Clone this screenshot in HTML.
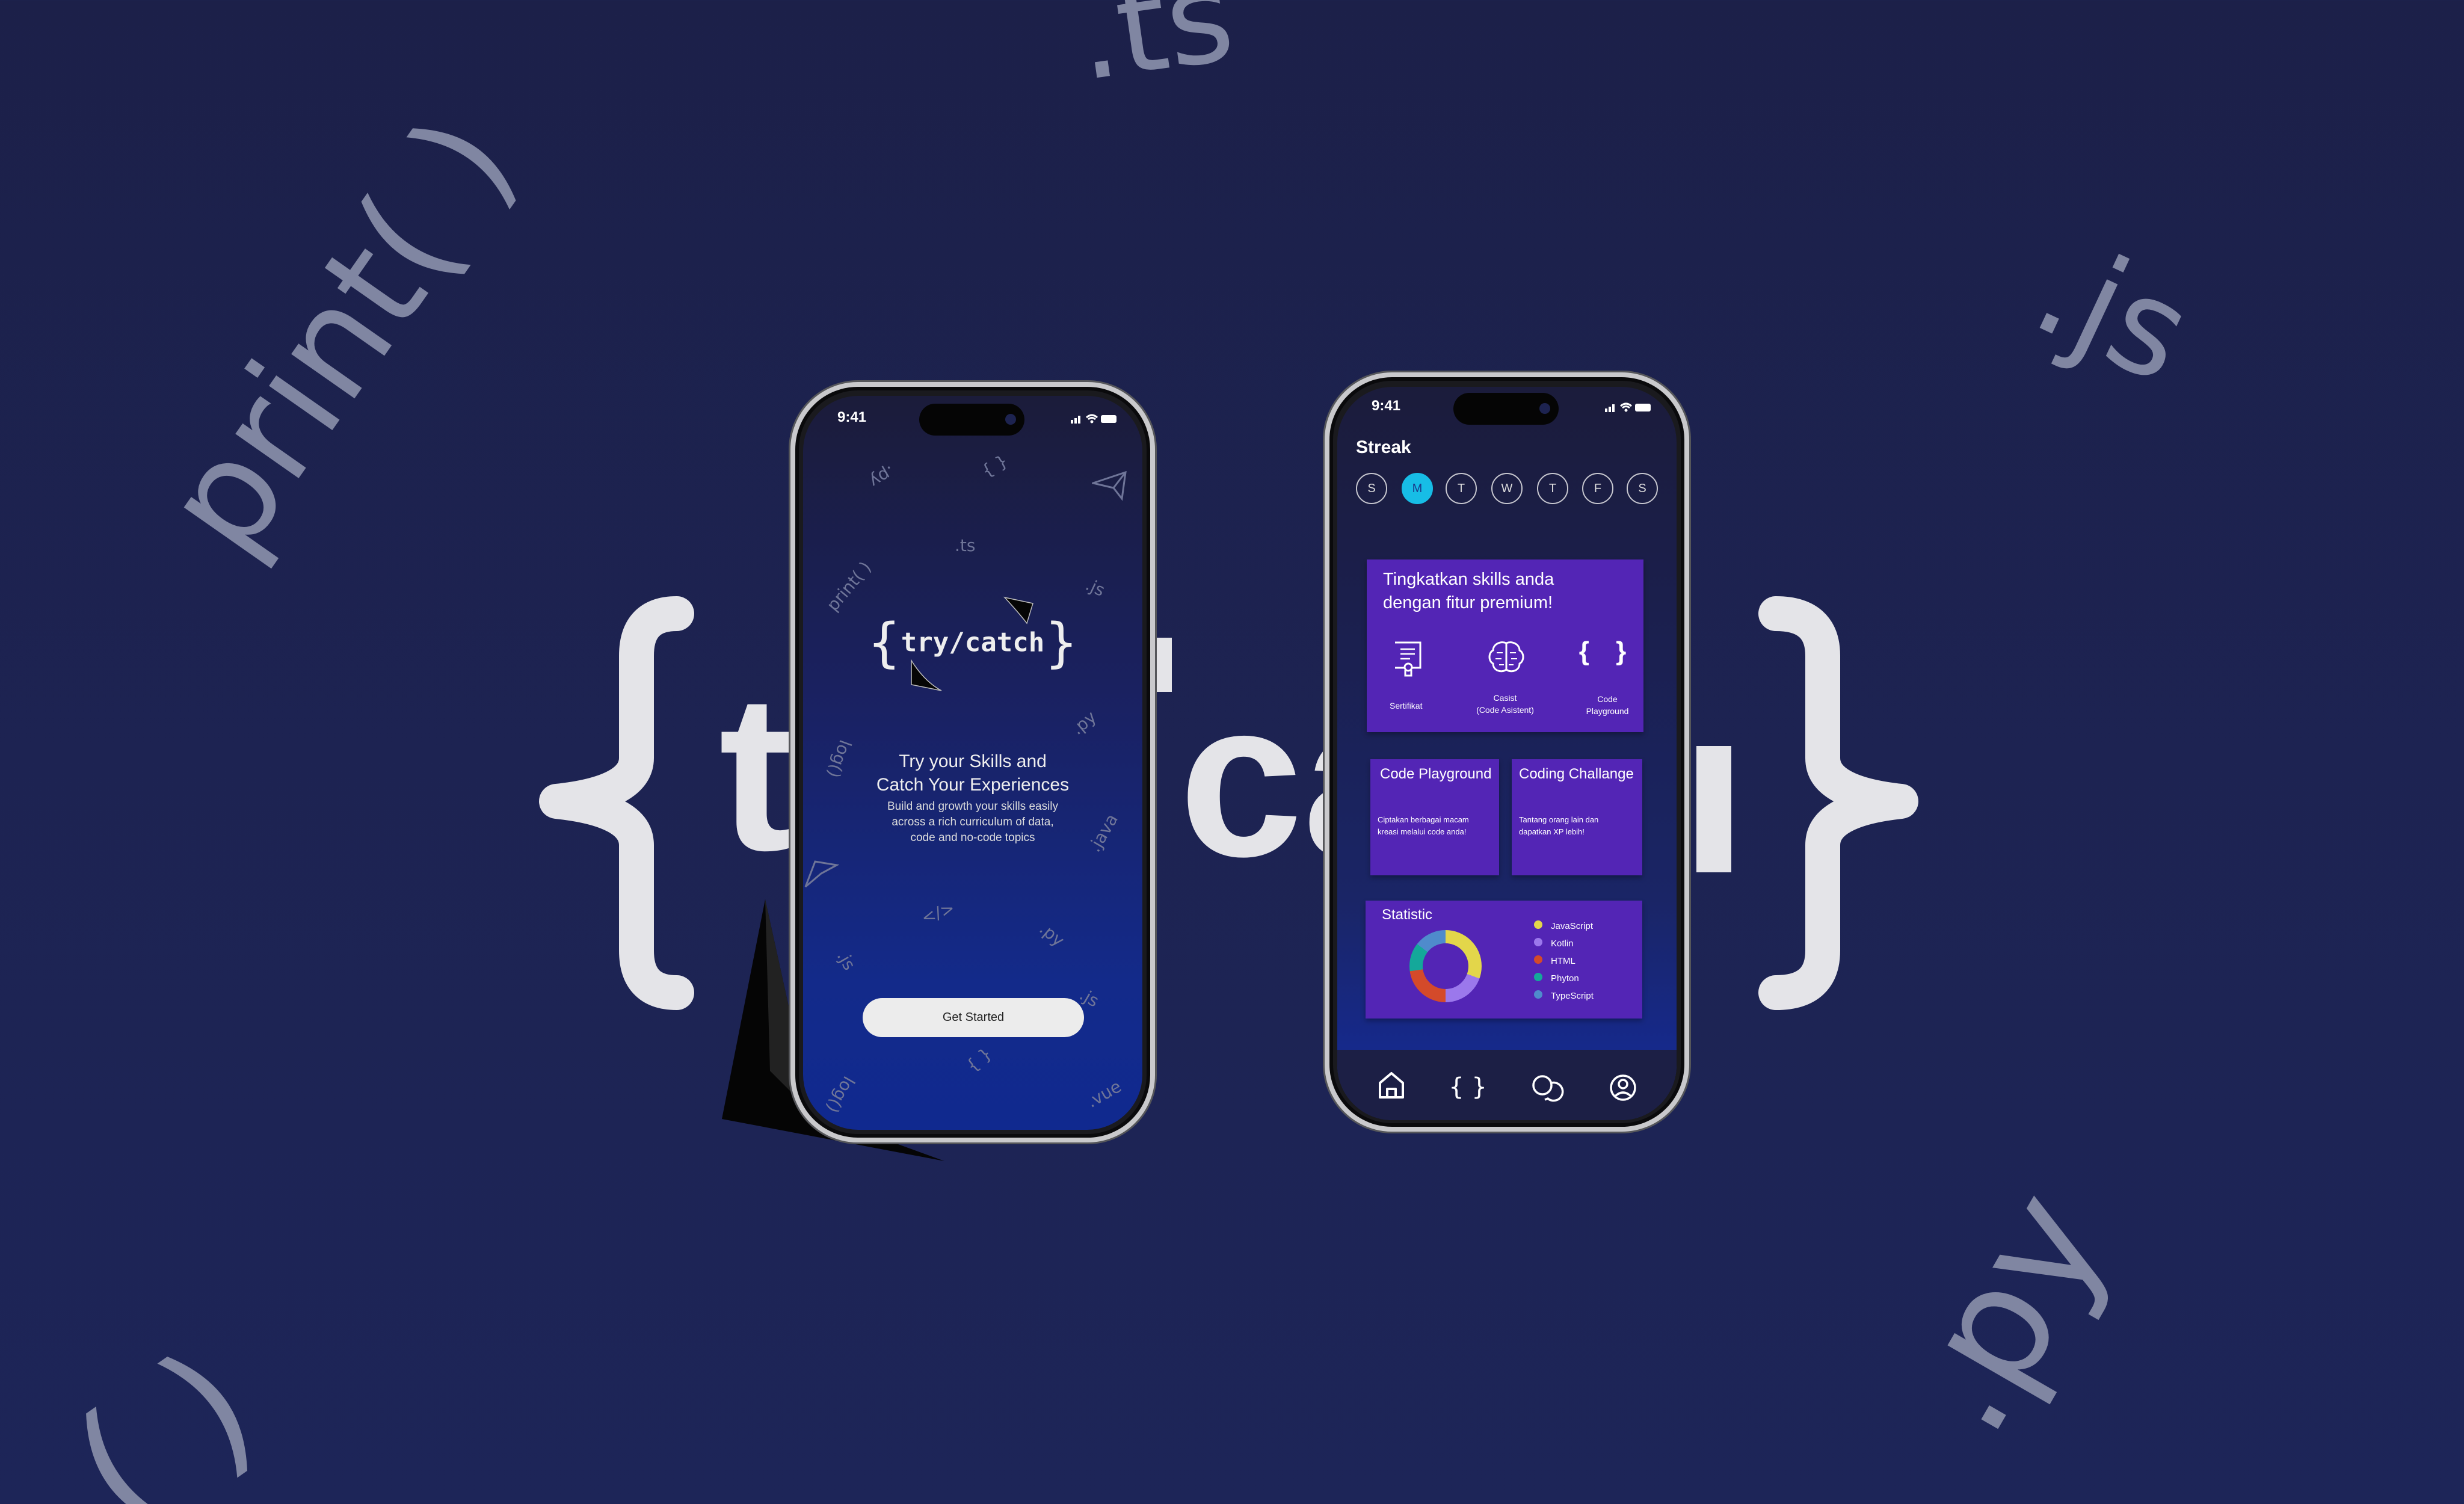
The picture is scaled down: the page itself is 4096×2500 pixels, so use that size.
<!DOCTYPE html>
<html style="width:4096px;height:2500px;overflow:hidden"><head><meta charset="utf-8"><style>
*{margin:0;padding:0;box-sizing:border-box}
body{width:4096px;height:2500px;overflow:hidden;position:relative;background:linear-gradient(180deg,#1c2049 0%,#1d2352 50%,#1d2558 100%);font-family:"Liberation Sans",sans-serif}
.a{position:absolute;white-space:nowrap}
.bg{color:#8086a2;font-family:"DejaVu Sans","Liberation Sans",sans-serif}
.big{color:#e4e4e8;font-weight:bold;font-family:"Liberation Sans",sans-serif}
.phone{position:absolute;border-radius:112px;background:#1a1a1e;border:8px solid #c9c9cc;box-shadow:0 0 0 3px #55565a,inset 0 0 0 6px #0a0a0c}
.screen{position:absolute;overflow:hidden;border-radius:92px}
.st{color:#fff;font-size:24px;font-weight:bold}
.island{position:absolute;background:#050505;border-radius:30px}
.sc{color:#6f7598;font-size:28px;font-family:"DejaVu Sans",sans-serif}
.card{position:absolute;background:#5325b5;box-shadow:0 4px 8px rgba(0,0,0,.3);color:#fff}
.day{position:absolute;width:52px;height:52px;border:2px solid #c8c8d0;border-radius:50%;color:#ddd;font-size:20px;text-align:center;line-height:48px;top:786px}
</style></head><body>

<!-- background scattered texts -->
<div class="a bg" style="left:160px;top:420px;font-size:235px;transform:rotate(-55deg);transform-origin:center">print( )</div>
<div class="a bg" style="left:1790px;top:-80px;font-size:210px;transform:rotate(-8deg)">.ts</div>
<div class="a bg" style="left:3390px;top:390px;font-size:220px;transform:rotate(25deg)">.js</div>
<div class="a bg" style="left:3130px;top:2030px;font-size:260px;transform:rotate(-60deg)">.py</div>
<div class="a bg" style="left:130px;top:2240px;font-size:260px;transform:rotate(-35deg)">( )</div>

<!-- big background logo -->
<svg class="a" style="left:0;top:0" width="4096" height="2500">
 <path d="M1125 1020 Q1058 1020 1058 1090 L1058 1260 Q1058 1318 925 1332 Q1058 1346 1058 1405 L1058 1580 Q1058 1650 1125 1650" stroke="#e4e4e8" stroke-width="58" fill="none" stroke-linecap="round" stroke-linejoin="round"/>
 <path d="M2952 1020 Q3030 1020 3030 1090 L3030 1260 Q3030 1318 3160 1332 Q3030 1346 3030 1405 L3030 1580 Q3030 1650 2952 1650" stroke="#e4e4e8" stroke-width="58" fill="none" stroke-linecap="round" stroke-linejoin="round"/>
</svg>
<div class="a big" style="left:1195px;top:1100px;font-size:370px;line-height:1">t</div>
<div class="a big" style="left:1960px;top:1110px;font-size:370px;line-height:1">ca</div>
<div class="a" style="left:1920px;top:1060px;width:28px;height:90px;background:#e4e4e8"></div>
<div class="a" style="left:2820px;top:1240px;width:58px;height:210px;background:#e4e4e8"></div>

<!-- black kite -->
<svg class="a" style="left:1150px;top:1480px" width="450" height="470"><polygon points="122,15 50,380 420,450 200,370" fill="#050505"/><polygon points="122,15 200,370 130,300" fill="#222"/></svg>

<!-- LEFT PHONE -->
<div class="phone" style="left:1314px;top:635px;width:606px;height:1264px"></div>
<div class="screen" style="left:1335px;top:658px;width:564px;height:1220px;background:linear-gradient(180deg,#1b1c3a 0%,#1a2160 40%,#132a8a 80%,#10298f 100%)">
 <div class="a st" style="left:57px;top:22px">9:41</div>
 <div class="island" style="left:193px;top:13px;width:175px;height:53px"><div style="position:absolute;right:14px;top:17px;width:18px;height:18px;border-radius:50%;background:#1d2350"></div></div>
 <svg class="a" style="left:445px;top:28px" width="80" height="20"><rect x="0" y="12" width="4" height="6" fill="#fff"/><rect x="6" y="9" width="4" height="9" fill="#fff"/><rect x="12" y="5" width="4" height="13" fill="#fff"/><path d="M26 8 Q35 0 44 8 M29 11 Q35 6 41 11" stroke="#fff" stroke-width="3" fill="none"/><circle cx="35" cy="15" r="2.5" fill="#fff"/><rect x="50" y="4" width="26" height="13" rx="3" fill="#fff"/></svg>
 <div class="a sc" style="left:110px;top:118px;transform:rotate(150deg)">.py</div>
 <div class="a sc" style="left:296px;top:100px;transform:rotate(-30deg)">{ }</div>
 <svg class="a" style="left:480px;top:125px" width="60" height="50"><path d="M2 20 L56 2 L50 46 L36 28 Z M36 28 L56 2" stroke="#6f7598" stroke-width="3" fill="none"/></svg>
 <div class="a sc" style="left:252px;top:232px">.ts</div>
 <div class="a sc" style="left:28px;top:300px;transform:rotate(-50deg)">print( )</div>
 <div class="a sc" style="left:470px;top:302px;transform:rotate(25deg)">.js</div>
 <div class="a sc" style="left:28px;top:587px;transform:rotate(110deg)">log()</div>
 <div class="a sc" style="left:445px;top:527px;transform:rotate(-40deg)">.py</div>
 <div class="a sc" style="left:465px;top:710px;transform:rotate(-60deg)">.java</div>
 <svg class="a" style="left:0;top:770px" width="60" height="50"><path d="M4 46 L20 4 L56 10 L30 24 Z" stroke="#6f7598" stroke-width="3" fill="none"/></svg>
 <div class="a sc" style="left:196px;top:843px;transform:rotate(-20deg)">&lt;/&gt;</div>
 <div class="a sc" style="left:392px;top:879px;transform:rotate(40deg)">.py</div>
 <div class="a sc" style="left:56px;top:922px;transform:rotate(60deg)">.js</div>
 <div class="a sc" style="left:460px;top:984px;transform:rotate(30deg)">.js</div>
 <div class="a sc" style="left:270px;top:1087px;transform:rotate(-40deg)">{ }</div>
 <div class="a sc" style="left:30px;top:1145px;transform:rotate(120deg)">log()</div>
 <div class="a sc" style="left:470px;top:1144px;transform:rotate(-30deg)">.vue</div>
 <!-- logo -->
 <div class="a" style="left:0;width:564px;top:360px;text-align:center;color:#eee;font-family:'DejaVu Sans Mono','Liberation Mono',monospace;font-weight:bold;line-height:100px"><span style="font-size:88px;font-weight:normal;vertical-align:middle;font-family:'DejaVu Sans',sans-serif">{</span><span style="font-size:44px;vertical-align:middle">try/catch</span><span style="font-size:88px;font-weight:normal;vertical-align:middle;font-family:'DejaVu Sans',sans-serif">}</span></div>
 <svg class="a" style="left:150px;top:330px" width="260" height="180"><path d="M185 5 L232 15 L222 48 Q208 30 185 5 Z" fill="#050505" stroke="#bbb" stroke-width="1.5"/><path d="M30 110 L30 150 L80 160 Q52 145 30 110 Z" fill="#050505" stroke="#bbb" stroke-width="1.5"/></svg>
 <div class="a" style="left:0;width:564px;top:588px;text-align:center;color:#eee;font-size:30px;line-height:39px">Try your Skills and<br>Catch Your Experiences</div>
 <div class="a" style="left:0;width:564px;top:670px;text-align:center;color:#ddd;font-size:19px;line-height:26px">Build and growth your skills easily<br>across a rich curriculum of data,<br>code and no-code topics</div>
 <div class="a" style="left:99px;top:1001px;width:368px;height:65px;background:#ececec;border-radius:33px;text-align:center;line-height:65px;color:#222;font-size:20px">Get Started</div>
</div>

<!-- RIGHT PHONE -->
<div class="phone" style="left:2202px;top:619px;width:606px;height:1262px"></div>
<div class="screen" style="left:2223px;top:643px;width:564px;height:1219px;background:linear-gradient(180deg,#1b1c3b 0%,#1b1f4d 30%,#1a2566 70%,#16298a 90%)">
 <div class="a st" style="left:57px;top:18px">9:41</div>
 <div class="island" style="left:193px;top:10px;width:175px;height:53px"><div style="position:absolute;right:14px;top:17px;width:18px;height:18px;border-radius:50%;background:#1d2350"></div></div>
 <svg class="a" style="left:445px;top:24px" width="80" height="20"><rect x="0" y="12" width="4" height="6" fill="#fff"/><rect x="6" y="9" width="4" height="9" fill="#fff"/><rect x="12" y="5" width="4" height="13" fill="#fff"/><path d="M26 8 Q35 0 44 8 M29 11 Q35 6 41 11" stroke="#fff" stroke-width="3" fill="none"/><circle cx="35" cy="15" r="2.5" fill="#fff"/><rect x="50" y="4" width="26" height="13" rx="3" fill="#fff"/></svg>
 <div class="a" style="left:31px;top:84px;color:#fff;font-size:30px;font-weight:bold">Streak</div>
</div>
<div class="day" style="left:2254px">S</div>
<div class="day" style="left:2330px;background:#17bde6;border-color:#17bde6;color:#1b3a8a">M</div>
<div class="day" style="left:2403px">T</div>
<div class="day" style="left:2479px">W</div>
<div class="day" style="left:2555px">T</div>
<div class="day" style="left:2630px">F</div>
<div class="day" style="left:2704px">S</div>

<div class="card" style="left:2272px;top:930px;width:460px;height:287px">
 <div class="a" style="left:27px;top:14px;font-size:29px;line-height:39px">Tingkatkan skills anda<br>dengan fitur premium!</div>
 <svg class="a" style="left:44px;top:135px" width="50" height="60"><path d="M3 3 H45 V45 H32 M18 45 H3 Z" stroke="#fff" stroke-width="3" fill="none"/><path d="M12 14 H36 M12 22 H36 M12 30 H28" stroke="#fff" stroke-width="2.5"/><circle cx="25" cy="44" r="6" stroke="#fff" stroke-width="3" fill="none"/><path d="M20 49 V58 H30 V49" stroke="#fff" stroke-width="3" fill="none"/></svg>
 <div class="a" style="left:38px;top:235px;font-size:14px">Sertifikat</div>
 <svg class="a" style="left:202px;top:135px" width="60" height="56"><path d="M30 4 C20 0 8 6 8 16 C0 20 0 34 8 38 C8 50 22 54 30 48 C38 54 52 50 52 38 C60 34 60 20 52 16 C52 6 40 0 30 4 Z M30 4 V48" stroke="#fff" stroke-width="3" fill="none"/><path d="M14 20 H24 M36 20 H46 M12 30 H22 M38 30 H48 M18 40 H26 M34 40 H42" stroke="#fff" stroke-width="2"/></svg>
 <div class="a" style="left:140px;top:220px;width:180px;text-align:center;font-size:14px;line-height:20px">Casist<br>(Code Asistent)</div>
 <div class="a" style="left:350px;top:128px;width:100px;text-align:center;font-size:44px;font-weight:bold;letter-spacing:16px">{ }</div>
 <div class="a" style="left:350px;top:222px;width:100px;text-align:center;font-size:14px;line-height:20px">Code<br>Playground</div>
</div>

<div class="card" style="left:2278px;top:1262px;width:214px;height:193px">
 <div class="a" style="left:16px;top:11px;font-size:24px">Code Playground</div>
 <div class="a" style="left:12px;top:91px;font-size:13px;line-height:20px">Ciptakan berbagai macam<br>kreasi melalui code anda!</div>
</div>
<div class="card" style="left:2513px;top:1262px;width:217px;height:193px">
 <div class="a" style="left:12px;top:11px;font-size:24px">Coding Challange</div>
 <div class="a" style="left:12px;top:91px;font-size:13px;line-height:20px">Tantang orang lain dan<br>dapatkan XP lebih!</div>
</div>

<div class="card" style="left:2270px;top:1497px;width:460px;height:196px">
 <div class="a" style="left:27px;top:10px;font-size:24px">Statistic</div>
 <div class="a" style="left:73px;top:49px;width:120px;height:120px;border-radius:50%;background:conic-gradient(#e3d64a 0 110deg,#9b78ec 110deg 180deg,#d44a2a 180deg 262deg,#14a89a 262deg 308deg,#4f8bcc 308deg 360deg)"></div>
 <div class="a" style="left:95px;top:71px;width:76px;height:76px;border-radius:50%;background:#5325b5"></div>
 <div class="a" style="left:280px;top:28px;font-size:15px;line-height:29px">
  <div><span style="display:inline-block;width:14px;height:14px;border-radius:50%;background:#e3d64a;margin-right:14px"></span>JavaScript</div>
  <div><span style="display:inline-block;width:14px;height:14px;border-radius:50%;background:#9b78ec;margin-right:14px"></span>Kotlin</div>
  <div><span style="display:inline-block;width:14px;height:14px;border-radius:50%;background:#d44a2a;margin-right:14px"></span>HTML</div>
  <div><span style="display:inline-block;width:14px;height:14px;border-radius:50%;background:#14a89a;margin-right:14px"></span>Phyton</div>
  <div><span style="display:inline-block;width:14px;height:14px;border-radius:50%;background:#4f8bcc;margin-right:14px"></span>TypeScript</div>
 </div>
</div>

<!-- bottom nav -->
<div class="a" style="left:2223px;top:1745px;width:564px;height:117px;background:#1c1f45;border-radius:0 0 92px 92px"></div>
<svg class="a" style="left:2223px;top:1770px" width="564" height="80">
 <path d="M71 54 V30 L90 14 L109 30 V54 Z M83 54 V40 H97 V54" stroke="#fff" stroke-width="4" fill="none" stroke-linejoin="round"/>
 <text x="217" y="50" fill="#fff" font-size="40" font-family="DejaVu Sans" text-anchor="middle">{ }</text>
 <circle cx="341" cy="34" r="15" stroke="#fff" stroke-width="3.5" fill="none"/><path d="M356 30 A15 15 0 1 1 350 56 L345 58" stroke="#fff" stroke-width="3.5" fill="none"/>
 <circle cx="475" cy="38" r="20" stroke="#fff" stroke-width="3.5" fill="none"/><circle cx="475" cy="32" r="7" stroke="#fff" stroke-width="3.5" fill="none"/><path d="M462 52 Q475 40 488 52" stroke="#fff" stroke-width="3.5" fill="none"/>
</svg>
</body></html>
